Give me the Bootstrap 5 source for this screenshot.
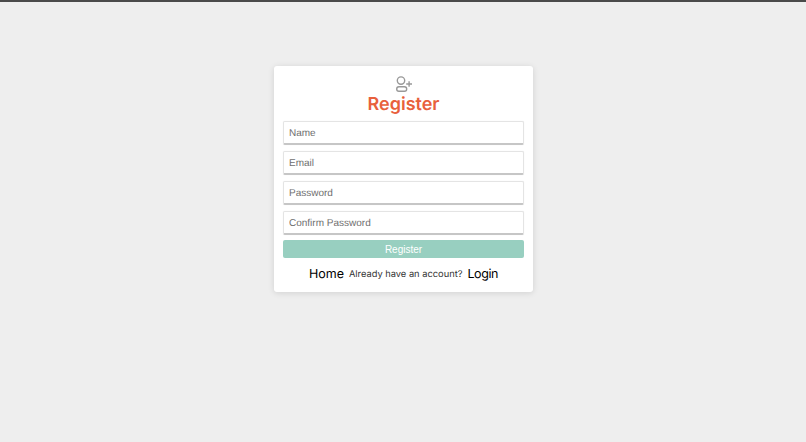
<!DOCTYPE html>
<html lang="en">
<head>
<meta charset="utf-8">
<title>Register</title>
<link rel="stylesheet" href="https://cdn.jsdelivr.net/npm/bootstrap@5.3.0/dist/css/bootstrap.min.css">
<style>
html,body{height:100%}
body{background:#eeeeee;border-top:2px solid #4a4a4a;overflow:hidden;font-family:"Liberation Sans",Arial,sans-serif;text-rendering:geometricPrecision}
.page-wrap{padding-top:64px;padding-left:1px}
.reg-box{width:259px;height:226px;background:#fff;border-radius:3px;box-shadow:0 1px 6px rgba(0,0,0,.12);padding:10px 9px 0}
.reg-icon{display:block;width:18px;height:16px;margin:0 auto}
.reg-title{font-family:Inter,"Noto Sans",sans-serif;font-size:18px;font-weight:600;line-height:24px;color:#e8603c;text-align:center;margin:1px 0 4px}
.reg-form{display:flex;flex-direction:column;gap:6px}
.reg-input{height:24px;width:100%;padding:1px 5px 0;font-size:10px;line-height:1;color:#555;border:1px solid #e4e4e4;border-bottom:2px solid #c6c6c6;border-radius:2px;box-shadow:0 0 1px rgba(0,0,0,.1);text-rendering:geometricPrecision}
.reg-input::placeholder{color:#6f6f6f;opacity:1}
.reg-btn{height:18px;padding:1px 0 0;margin-top:-1px;border:0;border-radius:2px;background:#98cfc0;color:#fff;font-size:10px;line-height:17px}
.reg-btn:hover{background:#98cfc0;color:#fff}
.reg-foot{margin-top:9px;gap:5px;height:16px}
.reg-foot a{font-family:Inter,"Noto Sans",sans-serif;font-size:12.5px;color:#000;text-decoration:none;line-height:16px}
.reg-foot a.login-link{letter-spacing:-.4px}
.reg-foot span{font-family:Inter,"Noto Sans",sans-serif;font-size:9.3px;color:#333;line-height:16px}
</style>
</head>
<body>
<div class="page-wrap d-flex justify-content-center">
  <div class="reg-box">
    <svg class="reg-icon" viewBox="0 0 18 16" fill="none" stroke="#999" stroke-width="1.4" aria-hidden="true">
      <circle cx="6" cy="4.6" r="3.7"/>
      <rect x="1.7" y="10.8" width="10" height="4.4" rx="2.2"/>
      <path d="M11.2 8h5.8M14.1 5.2v5.6"/>
    </svg>
    <h1 class="reg-title">Register</h1>
    <form class="reg-form">
      <input class="reg-input" type="text" placeholder="Name">
      <input class="reg-input" type="email" placeholder="Email">
      <input class="reg-input" type="password" placeholder="Password">
      <input class="reg-input" type="password" placeholder="Confirm Password">
      <button class="btn reg-btn" type="button">Register</button>
    </form>
    <div class="reg-foot d-flex justify-content-center align-items-center">
      <a href="#">Home</a>
      <span>Already have an account?</span>
      <a class="login-link" href="#">Login</a>
    </div>
  </div>
</div>
<script src="https://cdn.jsdelivr.net/npm/bootstrap@5.3.0/dist/js/bootstrap.bundle.min.js"></script>
</body>
</html>
